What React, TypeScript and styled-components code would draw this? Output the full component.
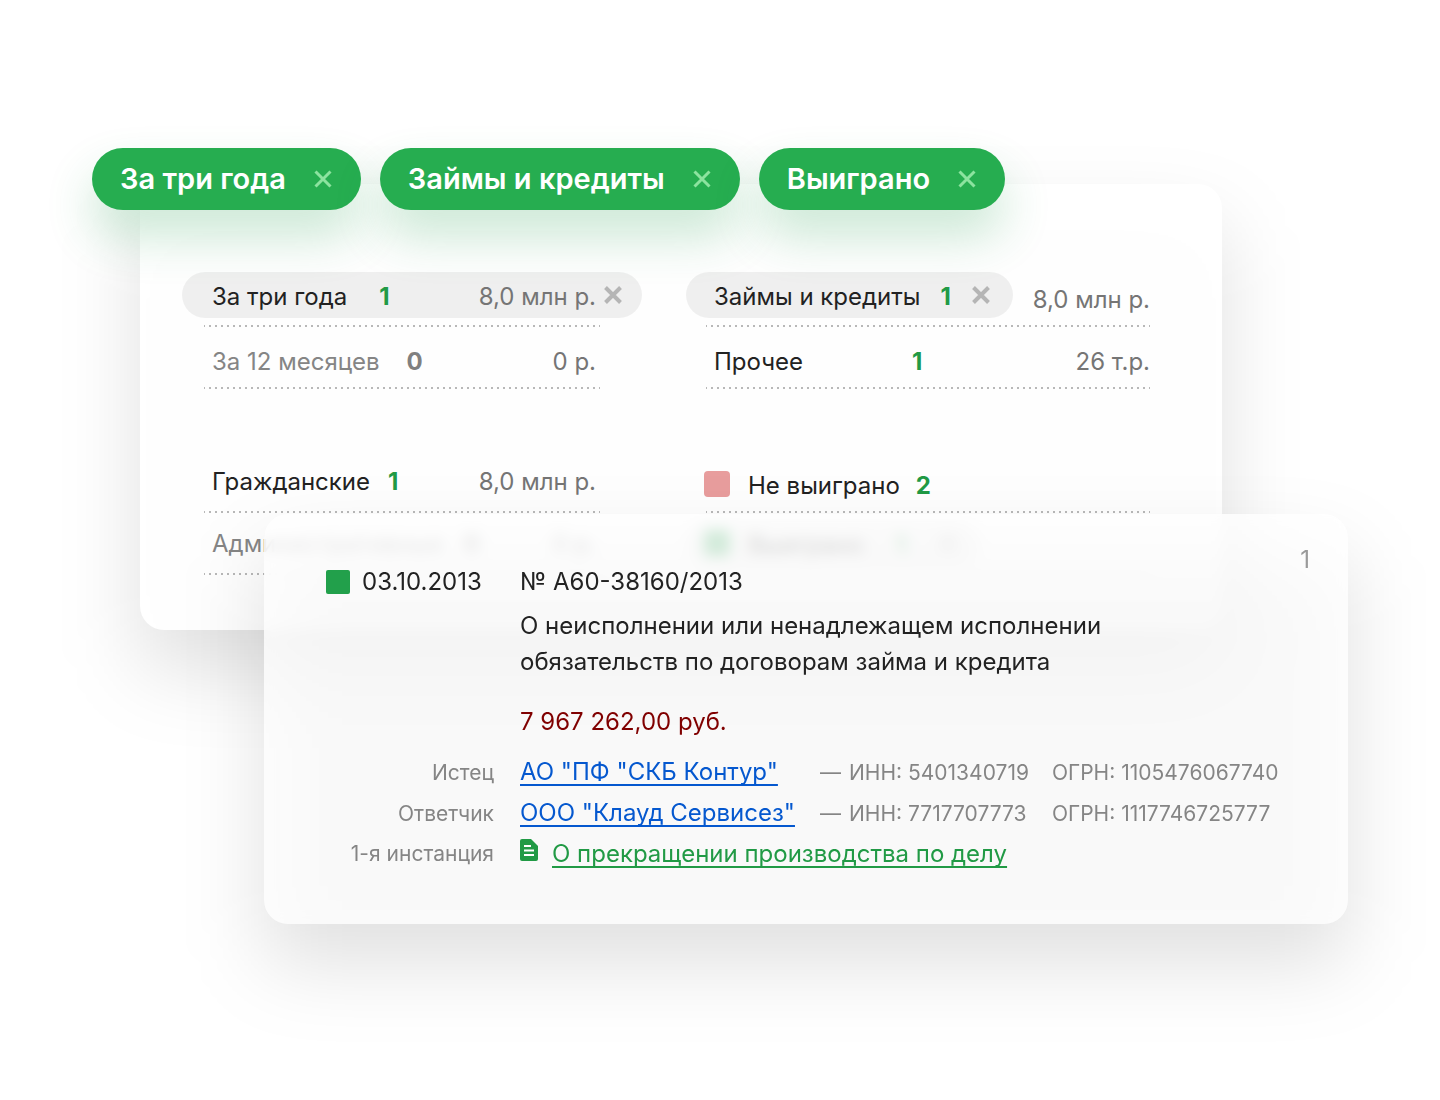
import React from "react";
import styled, { createGlobalStyle } from "styled-components";

const GlobalStyle = createGlobalStyle`
  *, *::before, *::after { box-sizing: border-box; }
  body {
    margin: 0;
    background: #fff;
    color: #222;
    font-family: Inter, "Liberation Sans", sans-serif;
    font-size: 24px;
    line-height: 30px;
  }
`;

const Page = styled.main`
  min-height: 100vh;
  padding: 148px 92px;
  overflow: hidden;
`;

/* Filter chips */

const ChipBar = styled.div`
  position: relative;
  z-index: 1;
  display: flex;
  gap: 19px;
`;

const Chip = styled.div`
  display: flex;
  align-items: center;
  gap: 27px;
  height: 62px;
  padding: 0 28px;
  border-radius: 31px;
  background: #26ad50;
  box-shadow: 0 26px 48px rgba(38, 160, 80, 0.24);
  color: #fff;
  font-size: 29px;
  font-weight: 600;
  white-space: nowrap;
`;

const CloseButton = styled.button<{ $tone: string }>`
  display: flex;
  padding: 0;
  border: 0;
  background: none;
  color: ${(p) => p.$tone};
  cursor: pointer;
`;

/* Layered panels */

const Layer = styled.div<{ $left: number; $right: number; $overlap: number }>`
  position: relative;
  margin: ${(p) => `-${p.$overlap}px ${p.$right}px 0 ${p.$left}px`};
`;

const Shade = styled.div`
  position: absolute;
  inset: 40px 0 -40px;
  border-radius: 24px;
  background: rgba(0, 0, 0, 0.12);
  filter: blur(40px);
`;

const SummaryPanel = styled.section`
  position: relative;
  display: grid;
  grid-template-columns: 396fr 444fr;
  gap: 62px 106px;
  padding: 81px 72px 55px 64px;
  border-radius: 24px;
  background: rgba(255, 255, 255, 0.95);
`;

const Group = styled.ul<{ $lift?: number }>`
  margin: 0;
  padding: 0;
  list-style: none;
  --lift: ${(p) => p.$lift ?? 0}px;
`;

const Row = styled.li<{ $muted?: boolean }>`
  display: flex;
  align-items: flex-end;
  height: 62px;
  padding-bottom: calc(9px + var(--lift));
  background: repeating-linear-gradient(90deg, #b8b8b8 0 1px, transparent 1px 5px, #b8b8b8 5px 6px) left bottom / 100% 2px
    no-repeat;
  color: ${(p) => (p.$muted ? "#858585" : "#222")};
  white-space: nowrap;
`;

const Cells = styled.div<{ $inset: number; $end?: number }>`
  flex: 1;
  display: flex;
  align-items: center;
  padding: 0 ${(p) => p.$end ?? 0}px 3px ${(p) => p.$inset}px;
`;

const Pill = styled.div<{ $wide?: boolean; $inset?: number }>`
  display: flex;
  align-items: center;
  height: 46px;
  margin-left: -20px;
  padding: 4px 22px 0 ${(p) => p.$inset ?? 28}px;
  border-radius: 23px;
  background: rgba(0, 0, 0, 0.06);
  ${(p) => p.$wide && "flex: 1; margin: 0 -42px 0 -22px; padding: 4px 19px 0 30px;"}
`;

const PillClose = styled(CloseButton)<{ $gap: number }>`
  margin: 0 0 4px ${(p) => p.$gap}px;
`;

const Count = styled.span<{ $gap: number; $zero?: boolean }>`
  margin-left: ${(p) => p.$gap}px;
  color: ${(p) => (p.$zero ? "#808080" : "#219a45")};
  font-weight: 700;
`;

const Sum = styled.span`
  margin-left: auto;
  color: #757575;
`;

const Swatch = styled.span<{ $color: string }>`
  flex: none;
  width: 24px;
  height: 24px;
  border-radius: 2px;
  background: ${(p) => p.$color};
`;

const RowSwatch = styled(Swatch)`
  width: 26px;
  height: 26px;
  margin: 0 18px 4px -2px;
  border-radius: 4px;
`;

/* Case panel */

const CasePanel = styled.article`
  position: relative;
  padding: 31px 38px 55px 62px;
  border-radius: 24px;
  background: rgba(255, 255, 255, 0.8);
  backdrop-filter: blur(7px);
`;

const CaseHeader = styled.header`
  display: flex;
  align-items: flex-end;
  height: 52px;
`;

const CaseDate = styled.div`
  display: flex;
  align-items: center;
  gap: 12px;
  width: 194px;
`;

const CaseIndex = styled.span`
  align-self: flex-start;
  margin-left: auto;
  color: #9a9a9a;
`;

const CaseBody = styled.div`
  padding-left: 194px;
`;

const Subject = styled.p`
  max-width: 600px;
  margin: 11px 0 27px;
  line-height: 36px;
`;

const Claim = styled.p`
  margin: 0 0 20px;
  color: #800000;
`;

const Parties = styled.dl`
  display: grid;
  gap: 10px;
  margin: 0;
`;

const Party = styled.div`
  display: grid;
  grid-template-columns: 168px 1fr;
  column-gap: 26px;
  align-items: baseline;
  white-space: nowrap;
`;

const Role = styled.dt`
  color: #858585;
  font-size: 21px;
  text-align: right;
`;

const Detail = styled.dd`
  display: grid;
  grid-template-columns: 300fr 232fr 258fr;
  align-items: baseline;
  margin: 0;
`;

const Ruling = styled.dd`
  display: flex;
  gap: 14px;
  margin: 0;
`;

const Link = styled.a<{ $green?: boolean }>`
  color: ${(p) => (p.$green ? "#219a45" : "#0558cf")};
  text-decoration: underline 2px;
  text-underline-offset: 4px;
  text-decoration-skip-ink: none;
`;

const Code = styled.span`
  color: #858585;
  font-size: 21px;
`;

const Dash = styled.span`
  margin-right: 8px;
`;

const Cross = ({ weight = 4 }: { weight?: number }) => (
  <svg width="20" height="20" viewBox="0 0 20 20" fill="none" stroke="currentColor" strokeWidth={weight} aria-hidden="true">
    <path d="M2.5 2.5l15 15M17.5 2.5l-15 15" />
  </svg>
);

const DocumentIcon = () => (
  <svg width="18" height="22" viewBox="0 0 18 22" aria-hidden="true">
    <path d="M2 0h9l7 7v13a2 2 0 0 1-2 2H2a2 2 0 0 1-2-2V2a2 2 0 0 1 2-2z" fill="#219a45" />
    <path d="M4 7h7M4 11.5h10M4 16h10" stroke="#fff" strokeWidth="2" />
  </svg>
);

const filters = ["За три года", "Займы и кредиты", "Выиграно"];

const parties = [
  { role: "Истец", name: 'АО "ПФ "СКБ Контур"', inn: "5401340719", ogrn: "1105476067740" },
  { role: "Ответчик", name: 'ООО "Клауд Сервисез"', inn: "7717707773", ogrn: "1117746725777" },
];

export default function App() {
  return (
    <>
      <GlobalStyle />
      <Page>
        <ChipBar>
          {filters.map((name) => (
            <Chip key={name}>
              {name}
              <CloseButton type="button" $tone="#8ce39f" aria-label={`Убрать: ${name}`}>
                <Cross weight={3} />
              </CloseButton>
            </Chip>
          ))}
        </ChipBar>

        <Layer $left={48} $right={126} $overlap={26}>
          <Shade />
          <SummaryPanel>
            <Group>
              <Row>
                <Pill $wide>
                  За три года
                  <Count $gap={32}>1</Count>
                  <Sum>8,0 млн р.</Sum>
                  <PillClose type="button" $tone="#b5b5b5" $gap={7} aria-label="Сбросить период">
                    <Cross />
                  </PillClose>
                </Pill>
              </Row>
              <Row $muted>
                <Cells $inset={8} $end={4}>
                  За 12 месяцев
                  <Count $gap={27} $zero>0</Count>
                  <Sum>0 р.</Sum>
                </Cells>
              </Row>
            </Group>
            <Group>
              <Row>
                <Pill>
                  Займы и кредиты
                  <Count $gap={20}>1</Count>
                  <PillClose type="button" $tone="#b5b5b5" $gap={20} aria-label="Сбросить категорию">
                    <Cross />
                  </PillClose>
                </Pill>
                <Cells $inset={8}>
                  <Sum>8,0 млн р.</Sum>
                </Cells>
              </Row>
              <Row>
                <Cells $inset={8}>
                  Прочее
                  <Count $gap={109}>1</Count>
                  <Sum>26 т.р.</Sum>
                </Cells>
              </Row>
            </Group>
            <Group $lift={4}>
              <Row>
                <Cells $inset={8} $end={4}>
                  Гражданские
                  <Count $gap={18}>1</Count>
                  <Sum>8,0 млн р.</Sum>
                </Cells>
              </Row>
              <Row $muted>
                <Cells $inset={8} $end={4}>
                  Административные
                  <Count $gap={20} $zero>0</Count>
                  <Sum>0 р.</Sum>
                </Cells>
              </Row>
            </Group>
            <Group>
              <Row>
                <Cells $inset={0}>
                  <RowSwatch $color="#e89d9d" />
                  Не выиграно
                  <Count $gap={16}>2</Count>
                </Cells>
              </Row>
              <Row>
                <Pill $inset={20}>
                  <RowSwatch $color="#22a04b" />
                  Выиграно
                  <Count $gap={32}>1</Count>
                  <PillClose type="button" $tone="#b5b5b5" $gap={32} aria-label="Сбросить исход">
                    <Cross />
                  </PillClose>
                </Pill>
              </Row>
            </Group>
          </SummaryPanel>
        </Layer>

        <Layer $left={172} $right={0} $overlap={116}>
          <Shade />
          <CasePanel>
            <CaseHeader>
              <CaseDate>
                <Swatch $color="#22a04b" />
                <time dateTime="2013-10-03">03.10.2013</time>
              </CaseDate>
              <span>№ А60-38160/2013</span>
              <CaseIndex>1</CaseIndex>
            </CaseHeader>
            <CaseBody>
              <Subject>О неисполнении или ненадлежащем исполнении обязательств по договорам займа и кредита</Subject>
              <Claim>7 967 262,00 руб.</Claim>
            </CaseBody>
            <Parties>
              {parties.map((p) => (
                <Party key={p.role}>
                  <Role>{p.role}</Role>
                  <Detail>
                    <span>
                      <Link href="#">{p.name}</Link>
                    </span>
                    <Code>
                      <Dash>—</Dash>ИНН: {p.inn}
                    </Code>
                    <Code>ОГРН: {p.ogrn}</Code>
                  </Detail>
                </Party>
              ))}
              <Party>
                <Role>1-я инстанция</Role>
                <Ruling>
                  <DocumentIcon />
                  <Link href="#" $green>О прекращении производства по делу</Link>
                </Ruling>
              </Party>
            </Parties>
          </CasePanel>
        </Layer>
      </Page>
    </>
  );
}
